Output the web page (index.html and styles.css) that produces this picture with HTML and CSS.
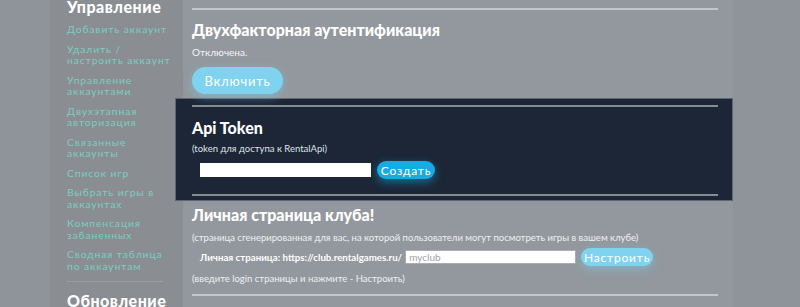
FILE: index.html
```html
<!DOCTYPE html>
<html lang="ru">
<head>
    <meta charset="UTF-8">
    <meta name="viewport" content="width=device-width, initial-scale=1.0">
    <title>Настройки клуба</title>
    <link rel="stylesheet" href="styles.css">
</head>
<body>
    <div class="page">
        <aside class="sidebar">
            <h3 class="side-title">Управление</h3>
            <nav class="side-menu">
                <a href="#">Добавить аккаунт</a>
                <a href="#">Удалить /<br>настроить аккаунт</a>
                <a href="#">Управление<br>аккаунтами</a>
                <a href="#">Двухэтапная<br>авторизация</a>
                <a href="#">Связанные<br>аккаунты</a>
                <a href="#">Список игр</a>
                <a href="#">Выбрать игры в<br>аккаунтах</a>
                <a href="#">Компенсация<br>забаненных</a>
                <a href="#">Сводная таблица<br>по аккаунтам</a>
            </nav>
            <div class="side-divider"></div>
            <h3 class="side-title">Обновление</h3>
        </aside>

        <main class="content">
            <section class="block first">
                <h2>Двухфакторная аутентификация</h2>
                <p class="status">Отключена.</p>
                <button class="btn btn-light btn-big">Включить</button>
            </section>

            <section class="block dark">
                <h2>Api Token</h2>
                <p class="note">(token для доступа к RentalApi)</p>
                <div class="row token-row">
                    <input type="text" class="field token-field">
                    <button class="btn btn-blue">Создать</button>
                </div>
                <div class="dark-end"></div>
            </section>

            <section class="block club">
                <h2>Личная страница клуба!</h2>
                <p class="note">(страница сгенерированная для вас, на которой пользователи могут посмотреть игры в вашем клубе)</p>
                <div class="row club-row">
                    <label class="club-label">Личная страница: https://club.rentalgames.ru/</label>
                    <input type="text" class="field club-field" placeholder="myclub">
                    <button class="btn btn-light">Настроить</button>
                </div>
                <p class="note last-note">(введите login страницы и нажмите - Настроить)</p>
                <div class="block-end"></div>
            </section>
        </main>
    </div>
</body>
</html>
```

FILE: styles.css
```css
*{
    margin: 0;
    padding: 0;
    box-sizing: border-box;
    font-family: Lato, 'Noto Sans', sans-serif;
}
body{
    background: #8f949a;
    overflow: hidden;
    height: 307px;
}
.page{
    display: flex;
    align-items: flex-start;
    padding-left: 50px;
}

/* sidebar */
.sidebar{
    width: 133px;
    min-height: 320px;
    background: #8a8d92;
    padding-left: 17px;
    margin-top: -3px;
}
.side-title{
    font-size: 16px;
    font-weight: 900;
    line-height: 20px;
    color: #fff;
    letter-spacing: 0.5px;
}
.side-menu{
    display: flex;
    flex-direction: column;
    gap: 8px;
    margin-top: 7px;
}
.side-menu a{
    font-size: 10.3px;
    line-height: 11.5px;
    letter-spacing: 0.9px;
    color: #7ccdc2;
    text-decoration: none;
}
.side-divider{
    width: 96px;
    height: 1px;
    background: #9a9da2;
    margin: 9px 0 9px;
}

/* main column */
.content{
    width: 550px;
    padding-left: 9px;
    padding-right: 15px;
    background: #93989e;
    min-height: 320px;
}
.block h2{
    font-size: 16px;
    font-weight: 900;
    line-height: 22px;
    color: #fff;
}
.first{
    padding-top: 8px;
}
.first::before{
    content: '';
    display: block;
    height: 2px;
    background: #c3c7cc;
    margin-bottom: 9px;
}
.status{
    font-size: 10px;
    line-height: 14px;
    color: #f4f5f7;
    margin-top: 4px;
}
.note{
    font-size: 9.5px;
    line-height: 14px;
    color: #eef0f2;
}

.btn{
    border: none;
    border-radius: 14px;
    color: #fff;
    font-size: 12px;
    letter-spacing: 0.8px;
    cursor: pointer;
}
.btn-light{
    background: #7fd3ee;
    box-shadow: 0 3px 10px rgba(120, 210, 240, 0.5);
    height: 18px;
    width: 72px;
}
.btn-big{
    width: 91px;
    height: 27px;
    font-size: 13px;
    margin-top: 8px;
    margin-bottom: 4px;
}
.btn-blue{
    background: #18abe0;
    box-shadow: 0 3px 10px rgba(20, 170, 230, 0.55);
    width: 58px;
    height: 18px;
}

/* api token panel */
.dark{
    background: #1c2636;
    border: 1px solid #5e6674;
    margin-left: -17px;
    margin-right: -15px;
    padding: 6px 14px 5px 16px;
    height: 103px;
}
.dark::before{
    content: '';
    display: block;
    height: 2px;
    background: #858c96;
    margin-bottom: 10px;
}
.dark .note{
    color: #dde2e8;
    margin-top: 3px;
}
.row{
    display: flex;
    align-items: center;
}
.token-row{
    margin-top: 5px;
    padding-left: 8px;
    gap: 6px;
}
.field{
    background: #fff;
    border: 1px solid #a9adb2;
    height: 14px;
    width: 171px;
    font-size: 10px;
    padding-left: 3px;
}
.token-field{
    border-color: #fff;
}
.field::placeholder{
    color: #a0a4a8;
}
.dark-end{
    height: 2px;
    background: #858c96;
    margin-top: 15px;
}

/* club page */
.club{
    padding-top: 3px;
}
.club .note{
    margin-top: 5px;
}
.club .last-note{
    margin-top: 6px;
}
.club-row{
    margin-top: 3px;
    padding-left: 8px;
    gap: 5px;
}
.club-label{
    font-size: 9.7px;
    font-weight: 700;
    color: #fff;
}
.club-field{
    margin-left: -2px;
}
.block-end{
    height: 2px;
    background: #c3c7cc;
    margin-top: 8px;
}
```
